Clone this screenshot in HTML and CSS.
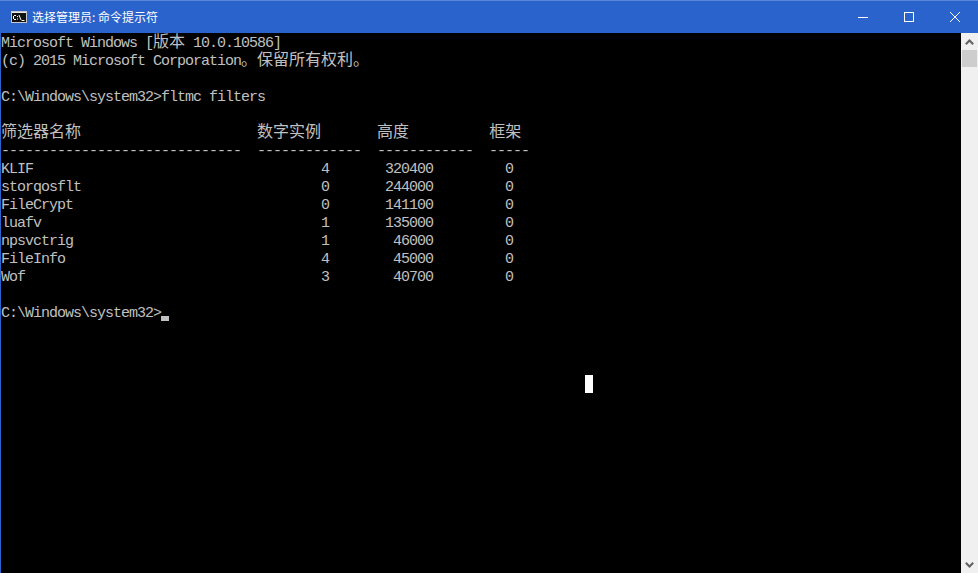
FILE: index.html
```html
<!DOCTYPE html>
<html lang="zh-CN">
<head>
<meta charset="utf-8">
<title>选择管理员: 命令提示符</title>
<link rel="stylesheet" href="styles.css">
</head>
<body>
<div class="window">
  <header class="titlebar">
    <svg class="app-icon" width="16" height="12" viewBox="0 0 16 12" aria-hidden="true">
      <rect x="0.5" y="0.5" width="15" height="11" fill="#111" stroke="#c8c8c8"/>
      <rect x="1" y="1" width="14" height="1" fill="#e8e8e8"/>
      <path d="M3 4.5h2M2.5 5v3M3 8.5h2M6.5 5v1M6.5 7.5v1M8 4l2 5M10.5 9.5h3" stroke="#fff" fill="none"/>
    </svg>
    <span class="title">选择管理员: 命令提示符</span>
    <div class="controls">
      <div class="control">
        <svg width="10" height="10" viewBox="0 0 10 10" aria-hidden="true"><path d="M0 5.5h10" stroke="#fff"/></svg>
      </div>
      <div class="control">
        <svg width="10" height="10" viewBox="0 0 10 10" aria-hidden="true"><rect x="0.5" y="0.5" width="9" height="9" fill="none" stroke="#fff"/></svg>
      </div>
      <div class="control">
        <svg width="10" height="10" viewBox="0 0 10 10" aria-hidden="true"><path d="M0 0L10 10M10 0L0 10" stroke="#fff"/></svg>
      </div>
    </div>
  </header>
  <div class="body">
    <main class="console">
      <span class="line">Microsoft Windows [<span class="cjk">版本</span> 10.0.10586]</span>
      <span class="line">(c) 2015 Microsoft Corporation<span class="cjk">。保留所有权利。</span></span>
      <span class="line"></span>
      <span class="line">C:\Windows\system32&gt;fltmc filters</span>
      <span class="line"></span>
      <span class="line"><span class="cjk">筛选器名称</span>                      <span class="cjk">数字实例</span>       <span class="cjk">高度</span>          <span class="cjk">框架</span></span>
      <span class="line">------------------------------  -------------  ------------  -----</span>
      <span class="line">KLIF                                    4       320400         0</span>
      <span class="line">storqosflt                              0       244000         0</span>
      <span class="line">FileCrypt                               0       141100         0</span>
      <span class="line">luafv                                   1       135000         0</span>
      <span class="line">npsvctrig                               1        46000         0</span>
      <span class="line">FileInfo                                4        45000         0</span>
      <span class="line">Wof                                     3        40700         0</span>
      <span class="line"></span>
      <span class="line">C:\Windows\system32&gt;<span class="cursor"></span></span>
      <div class="mouse-caret"></div>
    </main>
    <aside class="scrollbar">
      <div class="arrow">
        <svg width="9" height="6" viewBox="0 0 9 6" aria-hidden="true"><path d="M0.8 5.2L4.5 1.5L8.2 5.2" fill="none" stroke="#606060" stroke-width="2"/></svg>
      </div>
      <div class="thumb"></div>
      <div class="track"></div>
      <div class="arrow">
        <svg width="9" height="6" viewBox="0 0 9 6" aria-hidden="true"><path d="M0.8 0.8L4.5 4.5L8.2 0.8" fill="none" stroke="#606060" stroke-width="2"/></svg>
      </div>
    </aside>
  </div>
</div>
</body>
</html>
```

FILE: styles.css
```css
* { box-sizing: border-box; }
html, body { margin: 0; height: 100%; overflow: hidden; background: #000; }
.window {
  height: 573px;
  display: flex;
  flex-direction: column;
  border-left: 1px solid #2b63cc;
}
.titlebar {
  flex: 0 0 33px;
  display: flex;
  align-items: center;
  margin-left: -1px;
  padding-left: 11px;
  background: #2b63cc;
  border-top: 1px solid #5a86d8;
  color: #fff;
}
.app-icon { flex: none; margin-right: 5px; }
.title {
  flex: 1;
  font: 12px/16px "Noto Sans CJK SC", sans-serif;
}
.controls { display: flex; align-self: stretch; }
.control {
  width: 46px;
  display: flex;
  align-items: center;
  justify-content: center;
}
.body { flex: 1; display: flex; min-height: 0; }
.console {
  position: relative;
  flex: 1;
  background: #000;
  color: #c0c0c0;
  font: 15px/15px "Liberation Mono", monospace;
  letter-spacing: -1px;
  overflow: hidden;
}
.line {
  display: block;
  height: 18px;
  padding-top: 3px;
  white-space: pre;
}
.cjk {
  display: inline-block;
  vertical-align: top;
  height: 18px;
  margin-top: -5px;
  font: 16px/18px "Noto Sans CJK SC", sans-serif;
  letter-spacing: 0;
}
.cursor {
  display: inline-block;
  width: 8px;
  height: 5px;
  background: #c0c0c0;
  vertical-align: -4px;
}
.mouse-caret {
  position: absolute;
  left: 584px;
  top: 342px;
  width: 8px;
  height: 18px;
  background: #fff;
}
.scrollbar {
  flex: 0 0 17px;
  display: flex;
  flex-direction: column;
  background: #f0f0f0;
}
.arrow {
  flex: 0 0 17px;
  display: flex;
  align-items: center;
  justify-content: center;
}
.thumb {
  flex: 0 0 17px;
  margin: 0 1px;
  background: #cdcdcd;
}
.track { flex: 1; }
```
